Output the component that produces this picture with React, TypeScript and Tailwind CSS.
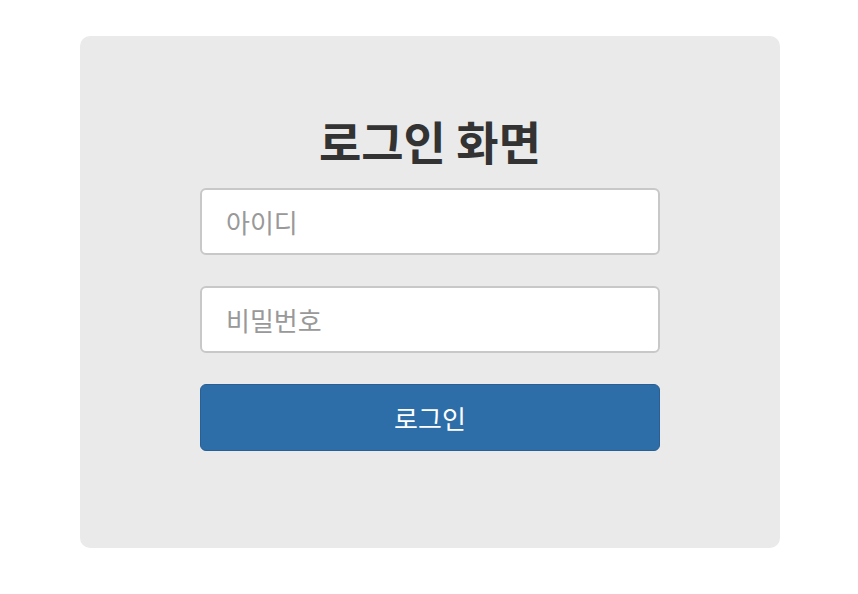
const font = { fontFamily: '"Noto Sans CJK KR", "Noto Sans", sans-serif' };

export default function App() {
  return (
    <div className="min-h-[594px] bg-white pt-[36px]" style={font}>
      <div className="ml-[80px] w-[700px] h-[512px] rounded-[10px] bg-[#eaeaea] pt-[77px]">
        <form
          className="mx-auto flex w-[460px] flex-col"
          onSubmit={(e) => e.preventDefault()}
        >
          <h1 className="text-center text-[46px] font-bold leading-[54px] text-[#333333]">
            로그인 화면
          </h1>
          <input
            type="text"
            placeholder="아이디"
            className="mt-[21px] h-[67px] rounded-[6px] border-2 border-[#c8c8c8] bg-white px-[24px] text-[26px] text-[#333] outline-none placeholder:text-[#999999]"
          />
          <input
            type="password"
            placeholder="비밀번호"
            className="mt-[31px] h-[67px] rounded-[6px] border-2 border-[#c8c8c8] bg-white px-[24px] text-[26px] text-[#333] outline-none placeholder:text-[#999999]"
          />
          <button
            type="submit"
            className="mt-[31px] h-[67px] rounded-[6px] border border-[#285f95] bg-[#2d6ea9] text-[26px] text-white"
          >
            로그인
          </button>
        </form>
      </div>
    </div>
  );
}
